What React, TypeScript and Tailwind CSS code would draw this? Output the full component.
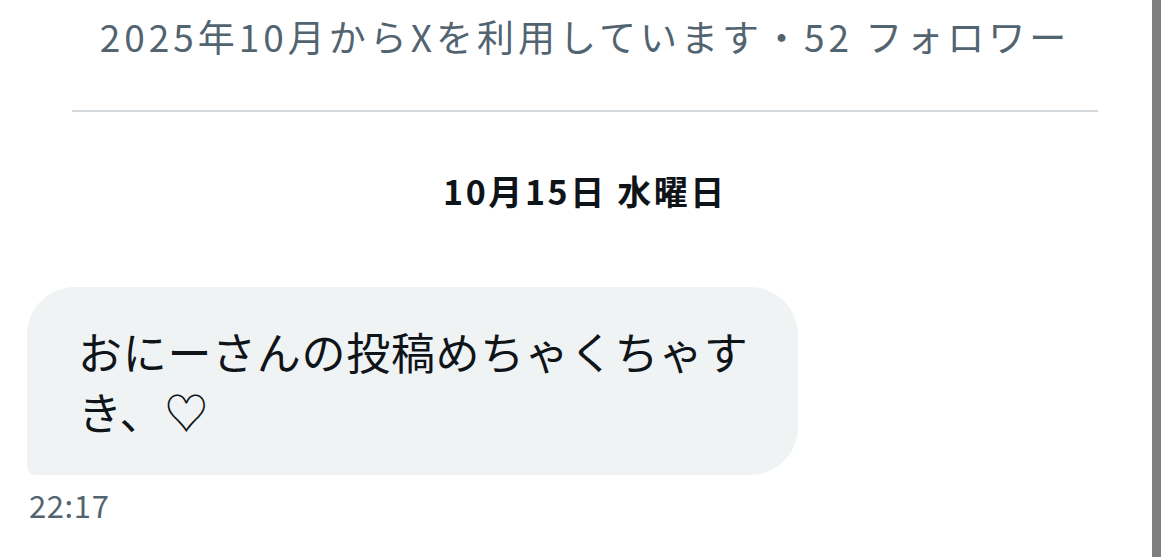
import React from 'react';

const jp = { fontFamily: '"Noto Sans CJK JP", "Noto Sans", sans-serif' };

export default function App() {
  return (
    <div className="relative w-[1170px] h-[557px] overflow-hidden bg-white" style={jp}>
      {/* account info */}
      <p className="pt-[12px] text-center text-[37px] leading-[48px] tracking-[4px] text-[#536471]">
        2025年10月からXを利用しています・52 フォロワー
      </p>
      <div className="mx-[72px] mt-[50px] h-[2px] bg-[#d3d9dd]" />

      {/* day separator */}
      <div className="mt-[59px] text-center text-[34px] font-bold leading-[40px] tracking-[2.6px] text-[#0f1419]">
        10月15日 水曜日
      </div>

      {/* message */}
      <div className="mt-[76px] ml-[27px] w-[771px] rounded-[48px] rounded-bl-[8px] bg-[#eff3f4] pl-[51px] pr-[48px] py-[34px] text-[44px] leading-[60px] tracking-[0.7px] text-[#0f1419]">
        おにーさんの投稿めちゃくちゃすき、♡
      </div>
      <div className="mt-[12px] ml-[29px] text-[31px] leading-[36px] tracking-[0.6px] text-[#536471]">22:17</div>

      {/* scrollbar */}
      <div className="absolute top-0 bottom-0 right-[9px] w-[9px] bg-[#7f7f7f]" />
    </div>
  );
}
